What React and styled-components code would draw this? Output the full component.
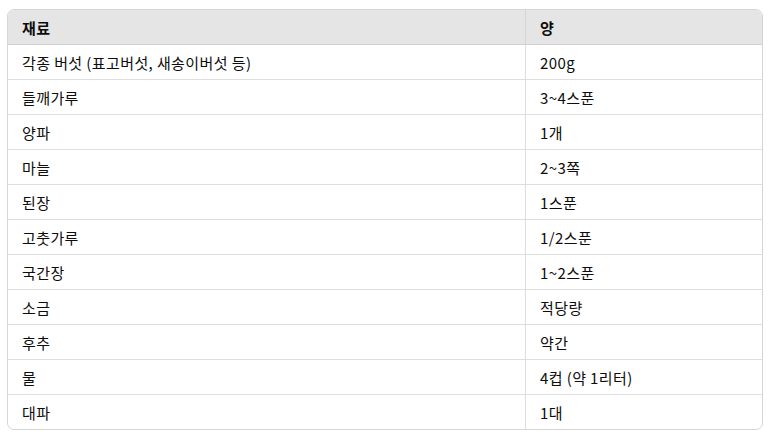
import React from 'react'
import styled, { createGlobalStyle } from 'styled-components'

const GlobalStyle = createGlobalStyle`
  html, body {
    margin: 0;
    padding: 0;
    background: #fff;
  }
  body {
    font-family: 'Noto Sans CJK KR', 'Noto Sans', sans-serif;
    color: #0d0d0d;
  }
`

const Page = styled.div`
  padding: 9px 10px 0 7px;
`

const TableWrap = styled.div`
  width: 754px;
  border: 1px solid #d6d6d6;
  border-radius: 7px;
  overflow: hidden;
`

const Table = styled.table`
  width: 100%;
  border-collapse: collapse;
  table-layout: fixed;
  font-size: 15px;
  letter-spacing: 0.4px;
`

const HeadCell = styled.th`
  background: #e5e5e5;
  height: 34px;
  padding: 0 14px;
  text-align: left;
  font-weight: 700;
  border-bottom: 1px solid #d0d0d0;
  border-left: ${props => (props.first ? 'none' : '1px solid #d6d6d6')};
  width: ${props => (props.first ? '489px' : 'auto')};
`

const Cell = styled.td`
  height: 34px;
  padding: 0 14px;
  border-top: ${props => (props.top ? 'none' : '1px solid #dedede')};
  border-left: ${props => (props.first ? 'none' : '1px solid #dedede')};
`

const rows = [
  ['각종 버섯 (표고버섯, 새송이버섯 등)', '200g'],
  ['들깨가루', '3~4스푼'],
  ['양파', '1개'],
  ['마늘', '2~3쪽'],
  ['된장', '1스푼'],
  ['고춧가루', '1/2스푼'],
  ['국간장', '1~2스푼'],
  ['소금', '적당량'],
  ['후추', '약간'],
  ['물', '4컵 (약 1리터)'],
  ['대파', '1대'],
]

const App = () => (
  <Page>
    <GlobalStyle />
    <TableWrap>
      <Table>
        <thead>
          <tr>
            <HeadCell first>재료</HeadCell>
            <HeadCell>양</HeadCell>
          </tr>
        </thead>
        <tbody>
          {rows.map((r, i) => (
            <tr key={i}>
              <Cell first top={i === 0}>{r[0]}</Cell>
              <Cell top={i === 0}>{r[1]}</Cell>
            </tr>
          ))}
        </tbody>
      </Table>
    </TableWrap>
  </Page>
)

export default App
